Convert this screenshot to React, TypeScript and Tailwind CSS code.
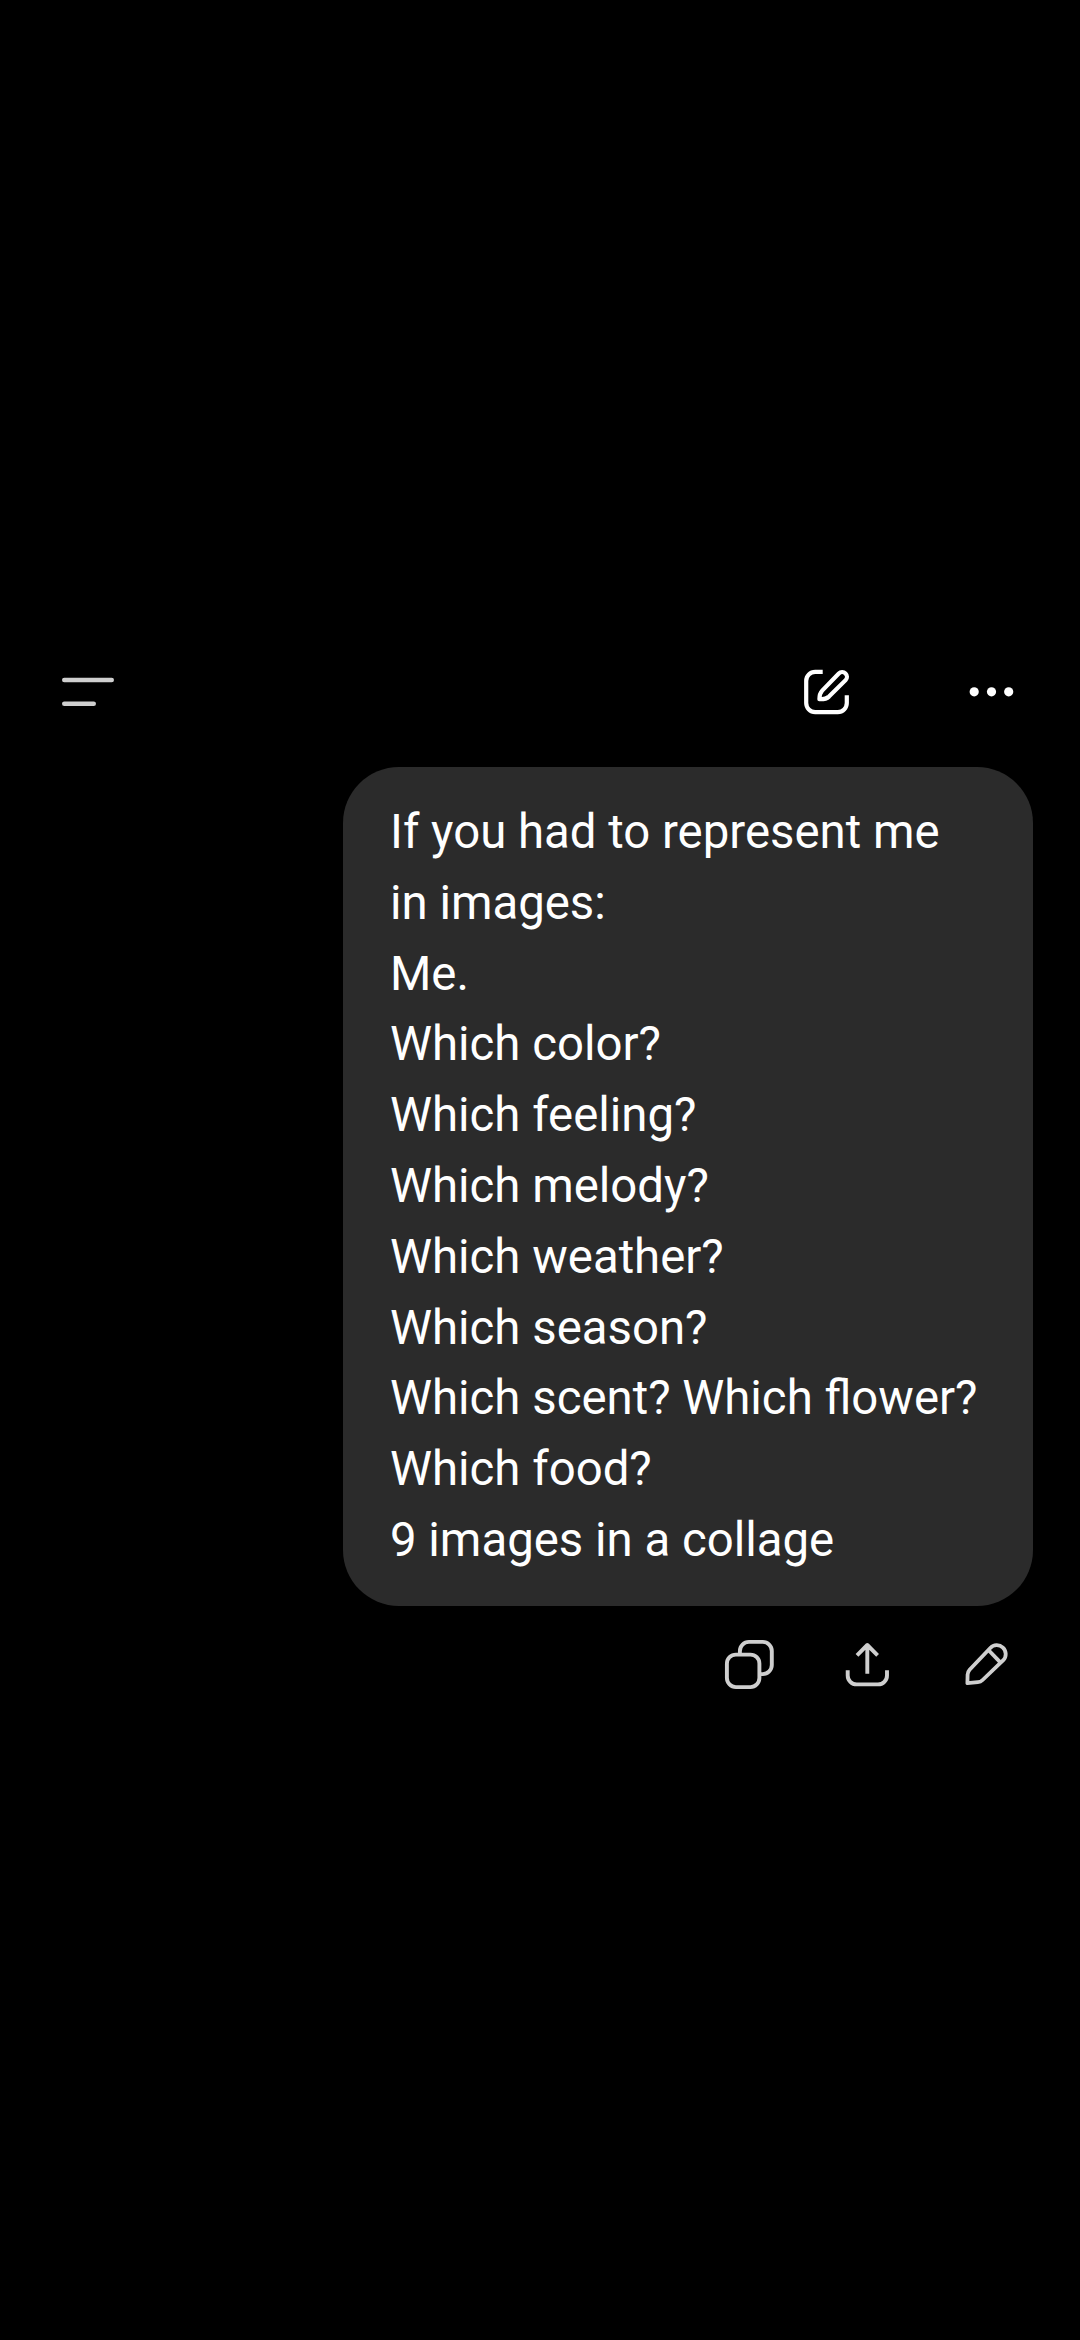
import type { ReactNode } from 'react';

const lines = [
  'If you had to represent me in images:',
  'Me.',
  'Which color?',
  'Which feeling?',
  'Which melody?',
  'Which weather?',
  'Which season?',
  'Which scent? Which flower?',
  'Which food?',
  '9 images in a collage',
];

interface IconButtonProps {
  label: string;
  children: ReactNode;
}

function IconButton({ label, children }: IconButtonProps) {
  return (
    <button type="button" aria-label={label} className="shrink-0">
      {children}
    </button>
  );
}

function MenuIcon() {
  return (
    <svg width="56" height="48" viewBox="0 0 56 48" fill="none" stroke="#cfcfcf" strokeWidth="4.6" strokeLinecap="round">
      <path d="M4.3 12H51.7M4.3 35.7H33.7" />
    </svg>
  );
}

function ComposeIcon() {
  return (
    <svg width="48" height="48" viewBox="0 0 48 48" fill="none" stroke="#ffffff" strokeWidth="4.2" strokeLinejoin="round">
      <path d="M20.7 3.9H13.2a9 9 0 0 0-9 9V35.1a9 9 0 0 0 9 9H35.8a9 9 0 0 0 9-9V27.3" />
      <path d="M17.4 31.2C17.4 27.6 18 24.9 20.2 22.6L36.8 5.5A4.7 4.7 0 0 1 43.6 12.1L27 28.6C24.6 30.8 21.4 31.4 17.4 31.2Z" />
    </svg>
  );
}

function MoreIcon() {
  return (
    <svg width="48" height="48" viewBox="0 0 48 48" fill="#ffffff">
      <circle cx="6.2" cy="23.8" r="4.6" />
      <circle cx="23.5" cy="23.8" r="4.6" />
      <circle cx="40.7" cy="23.8" r="4.6" />
    </svg>
  );
}

function CopyIcon() {
  return (
    <svg width="56" height="56" viewBox="0 0 56 56" fill="none" stroke="#cfcfcf" strokeWidth="3.9">
      <rect x="8.9" y="18.6" width="32.5" height="32.5" rx="9" />
      <path d="M21.9 18.6V14.9a9 9 0 0 1 9-9H44.8a9 9 0 0 1 9 9V29.1a9 9 0 0 1-9 9H41.4" />
    </svg>
  );
}

function ShareIcon() {
  return (
    <svg width="56" height="56" viewBox="0 0 56 56" fill="none" stroke="#cfcfcf" strokeWidth="3.9" strokeLinejoin="round">
      <path d="M29.3 37.7V9.5M19 19.3 29.3 9 39.6 19.3" />
      <path d="M9.7 34.2V39.4a9 9 0 0 0 9 9H40a9 9 0 0 0 9-9V34.2" />
    </svg>
  );
}

function PencilIcon() {
  return (
    <svg width="56" height="56" viewBox="0 0 56 56" fill="none" stroke="#cfcfcf" strokeWidth="3.8" strokeLinejoin="round">
      <path d="M9.4 47.2 9.6 38.6Q9.8 35.8 11.6 33.8L32.3 12A8.9 8.9 0 0 1 45.3 24.2L24.6 44Q22.6 46 19.8 46.2Z" />
      <path d="M30.4 14 42.6 26.6" />
    </svg>
  );
}

export default function App() {
  return (
    <div className="flex h-[2340px] w-[1080px] flex-col overflow-hidden bg-black pt-[668px] font-['Roboto',sans-serif]">
      <header className="flex h-12 items-center pr-[64px] pl-[60px]">
        <IconButton label="Menu">
          <MenuIcon />
        </IconButton>
        <div className="ml-auto flex items-center gap-[118px]">
          <IconButton label="New chat">
            <ComposeIcon />
          </IconButton>
          <IconButton label="More">
            <MoreIcon />
          </IconButton>
        </div>
      </header>

      <main className="mt-[51px] flex flex-col items-end pr-[47px]">
        <div className="h-[839px] w-[690px] rounded-[56px] bg-[#2b2b2b] pt-[30px] pr-[46px] pl-[47px] text-[47.35px] leading-[70.8px] text-white">
          {lines.map((line) => (
            <p key={line}>{line}</p>
          ))}
        </div>

        <div className="mt-[30px] mr-[19px] flex items-center gap-16">
          <IconButton label="Copy">
            <CopyIcon />
          </IconButton>
          <IconButton label="Share">
            <ShareIcon />
          </IconButton>
          <IconButton label="Edit">
            <PencilIcon />
          </IconButton>
        </div>
      </main>
    </div>
  );
}
